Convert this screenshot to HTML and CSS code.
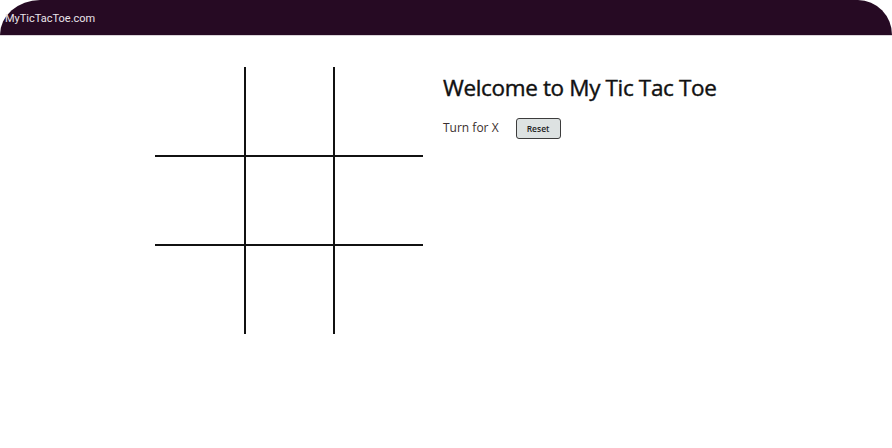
FILE: index.html
```html
<!DOCTYPE html>
<html lang="en">
<head>
<meta charset="utf-8">
<title>MyTicTacToe.com</title>
<link rel="stylesheet" href="styles.css">
</head>
<body>
<header class="topbar">
  <span class="brand">MyTicTacToe.com</span>
</header>
<main class="game">
  <div class="board">
    <div class="cell c1"></div>
    <div class="cell c2"></div>
    <div class="cell c3"></div>
    <div class="cell c4"></div>
    <div class="cell c5"></div>
    <div class="cell c6"></div>
    <div class="cell c7"></div>
    <div class="cell c8"></div>
    <div class="cell c9"></div>
  </div>
  <section class="panel">
    <h1 class="title">Welcome to My Tic Tac Toe</h1>
    <div class="status">
      <span class="turn">Turn for X</span>
      <button class="reset" type="button">Reset</button>
    </div>
  </section>
</main>
</body>
</html>
```
FILE: styles.css
```css
html, body {
  margin: 0;
  padding: 0;
  background: #ffffff;
}

.topbar {
  height: 35px;
  background: #260a23;
  border-radius: 40px 34px 0 0 / 35px 35px 0 0;
  border-bottom: 1px solid #d9d3d8;
  display: flex;
  align-items: center;
  padding-left: 5px;
}

.brand {
  font-family: Roboto, "Liberation Sans", sans-serif;
  font-size: 11px;
  color: #e9e4ea;
  padding-top: 1px;
}

.game {
  display: flex;
  align-items: flex-start;
  gap: 20px;
  padding: 31px 0 0 155px;
}

.board {
  display: grid;
  grid-template-columns: 91px 89px 88px;
  grid-template-rows: 90px 89px 88px;
}

.cell {
  box-sizing: border-box;
}

.c1, .c2, .c4, .c5 {
  border-right: 2px solid #111;
  border-bottom: 2px solid #111;
}
.c3, .c6 {
  border-bottom: 2px solid #111;
}
.c7, .c8 {
  border-right: 2px solid #111;
}

.panel {
  padding-top: 6px;
}

.title {
  margin: 0;
  font-family: "Open Sans", "Noto Sans", sans-serif;
  font-weight: 400;
  font-size: 22.5px;
  line-height: 30px;
  color: #111;
  letter-spacing: -0.35px;
  -webkit-text-stroke: 0.4px #111;
}

.status {
  display: flex;
  align-items: center;
  gap: 17px;
  margin-top: 15px;
}

.turn {
  font-family: "Open Sans", "Noto Sans", sans-serif;
  font-size: 12px;
  color: #3a2e2e;
  padding-bottom: 3px;
}

.reset {
  width: 45px;
  height: 21px;
  padding: 0;
  border: 1px solid #3c3c3c;
  border-radius: 3px;
  background: #dde2e2;
  font-family: "Open Sans", "Noto Sans", sans-serif;
  font-size: 8.5px;
  font-weight: 600;
  color: #222;
}
```
